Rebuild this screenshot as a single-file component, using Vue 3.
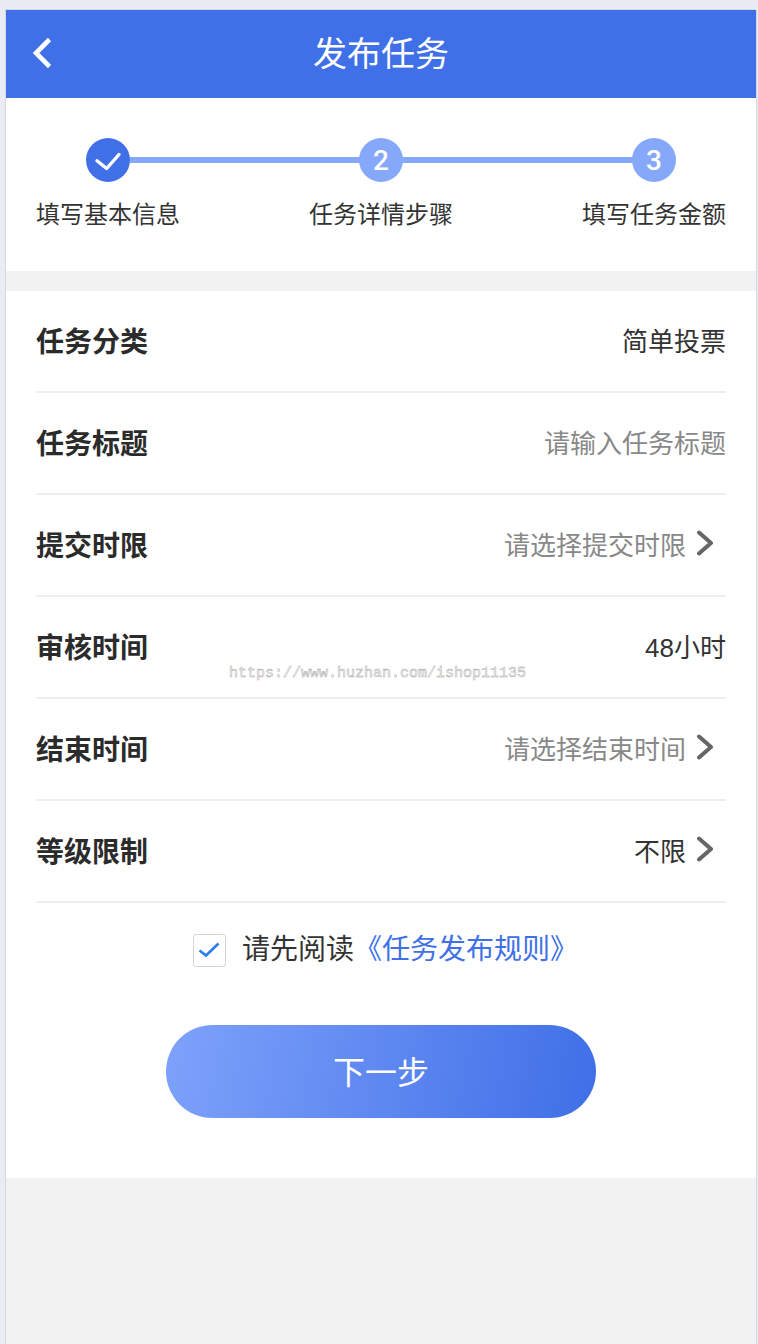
<script setup>
const steps = [
  { label: '填写基本信息', done: true },
  { label: '任务详情步骤', num: 2 },
  { label: '填写任务金额', num: 3 }
];

const rows = [
  { label: '任务分类', value: '简单投票' },
  { label: '任务标题', value: '请输入任务标题', muted: true },
  { label: '提交时限', value: '请选择提交时限', muted: true, arrow: true },
  { label: '审核时间', value: '48小时' },
  { label: '结束时间', value: '请选择结束时间', muted: true, arrow: true },
  { label: '等级限制', value: '不限', arrow: true }
];
</script>

<template>
  <div class="page">
    <div class="screen">
      <header class="top">
        <svg class="back" width="22" height="32" viewBox="0 0 22 32">
          <path d="M18.500 2.500 L5 16 L18.500 29.500" fill="none" stroke="#fff" stroke-width="4.600" />
        </svg>
        <h1>发布任务</h1>
      </header>

      <section class="steps">
        <div class="track"></div>
        <div v-for="s in steps" :key="s.label" class="step">
          <div class="dot" :class="{ done: s.done }">
            <svg v-if="s.done" width="28" height="28" viewBox="0 0 28 28">
              <path d="M3 14.700 L12.700 22.500 L25 8.500" fill="none" stroke="#fff" stroke-width="3.400" stroke-linecap="round" stroke-linejoin="round" />
            </svg>
            <template v-else>{{ s.num }}</template>
          </div>
          <div class="step-label">{{ s.label }}</div>
        </div>
      </section>

      <section class="form">
        <div v-for="r in rows" :key="r.label" class="row">
          <span class="label">{{ r.label }}</span>
          <span class="value" :class="{ muted: r.muted }">{{ r.value }}</span>
          <svg v-if="r.arrow" class="arrow" width="19" height="26" viewBox="0 0 19 26">
            <path d="M3 2.500 L15 13 L3 23.500" fill="none" stroke="#666" stroke-width="4" stroke-linecap="round" stroke-linejoin="round" />
          </svg>
        </div>

        <div class="agree">
          <span class="box">
            <svg width="22" height="18" viewBox="0 0 22 18">
              <path d="M1.500 9.500 L8 14.500 L20.500 2.500" fill="none" stroke="#2a7bf0" stroke-width="2.600" />
            </svg>
          </span>
          <span class="agree-text">请先阅读</span>
          <a class="rule">《任务发布规则》</a>
        </div>

        <button class="next" type="button">下一步</button>
      </section>

      <div class="mark">https://www.huzhan.com/ishop11135</div>
    </div>
  </div>
</template>

<style>
html, body {
  margin: 0;
  background: #e9ecf5;
}
</style>

<style scoped>
.page {
  height: 1344px;
  padding: 10px 2px 0 6px;
  box-sizing: border-box;
  overflow: hidden;
  font-family: "Liberation Sans", "Noto Sans CJK SC", sans-serif;
}

.screen {
  position: relative;
  height: 1334px;
  background: #f2f2f2;
  box-shadow: -1px -1px 0 #d5d8df, 1px 0 0 #d5d8df;
}

.top {
  position: relative;
  height: 88px;
  padding-bottom: 6px;
  box-sizing: border-box;
  background: #4070e8;
  display: flex;
  align-items: center;
  justify-content: center;
}

.back {
  position: absolute;
  left: 25px;
  top: 27px;
}

h1 {
  margin: 0;
  font-size: 34px;
  font-weight: 400;
  color: #fff;
}

.steps {
  position: relative;
  height: 173px;
  padding: 40px 30px 0;
  box-sizing: border-box;
  background: #fff;
  display: flex;
  justify-content: space-between;
}

.track {
  position: absolute;
  left: 124px;
  right: 100px;
  top: 59px;
  height: 6px;
  background: #86a8fa;
}

.step {
  position: relative;
  width: 144px;
  display: flex;
  flex-direction: column;
  align-items: center;
}

.dot {
  width: 44px;
  height: 44px;
  border-radius: 50%;
  background: #86a8fa;
  color: #fff;
  font-family: Roboto, sans-serif;
  font-weight: 500;
  font-size: 28px;
  display: flex;
  align-items: center;
  justify-content: center;
}

.dot.done {
  background: #4070e8;
}

.step-label {
  margin-top: 17px;
  font-size: 24px;
  line-height: 32px;
  color: #333;
  white-space: nowrap;
}

.form {
  margin-top: 20px;
  height: 887px;
  padding: 0 30px;
  box-sizing: border-box;
  background: #fff;
}

.row {
  height: 102px;
  padding-bottom: 4px;
  border-bottom: 2px solid #eeeeee;
  box-sizing: border-box;
  display: flex;
  align-items: center;
}

.label {
  flex: 1;
  margin-top: 2px;
  font-size: 28px;
  font-weight: 700;
  color: #2b2b2b;
}

.value {
  font-size: 26px;
  color: #333;
}

.value.muted {
  color: #888;
}

.arrow {
  margin-left: 10px;
  margin-right: 11px;
}

.agree {
  margin-top: 27px;
  padding-left: 9px;
  display: flex;
  align-items: center;
  justify-content: center;
  height: 40px;
  font-size: 28px;
}

.box {
  width: 33px;
  height: 33px;
  border: 1px solid #d4d4d4;
  border-radius: 3px;
  box-sizing: border-box;
  margin-right: 16px;
  display: flex;
  align-items: center;
  justify-content: center;
}

.agree-text {
  color: #333;
  margin-bottom: 6px;
}

.rule {
  color: #4070e8;
  margin-bottom: 6px;
}

.next {
  display: block;
  width: 430px;
  height: 93px;
  margin: 55px auto 0;
  border: none;
  border-radius: 47px;
  background: linear-gradient(100deg, #7ea2fb, #3f6fe7);
  color: #fff;
  font-family: inherit;
  font-size: 32px;
  padding-bottom: 4px;
}

.mark {
  position: absolute;
  left: 223px;
  top: 655px;
  font-family: "Liberation Mono", monospace;
  font-size: 15px;
  color: #fff;
  -webkit-text-stroke: .5px #a6a6a6;
}
</style>
